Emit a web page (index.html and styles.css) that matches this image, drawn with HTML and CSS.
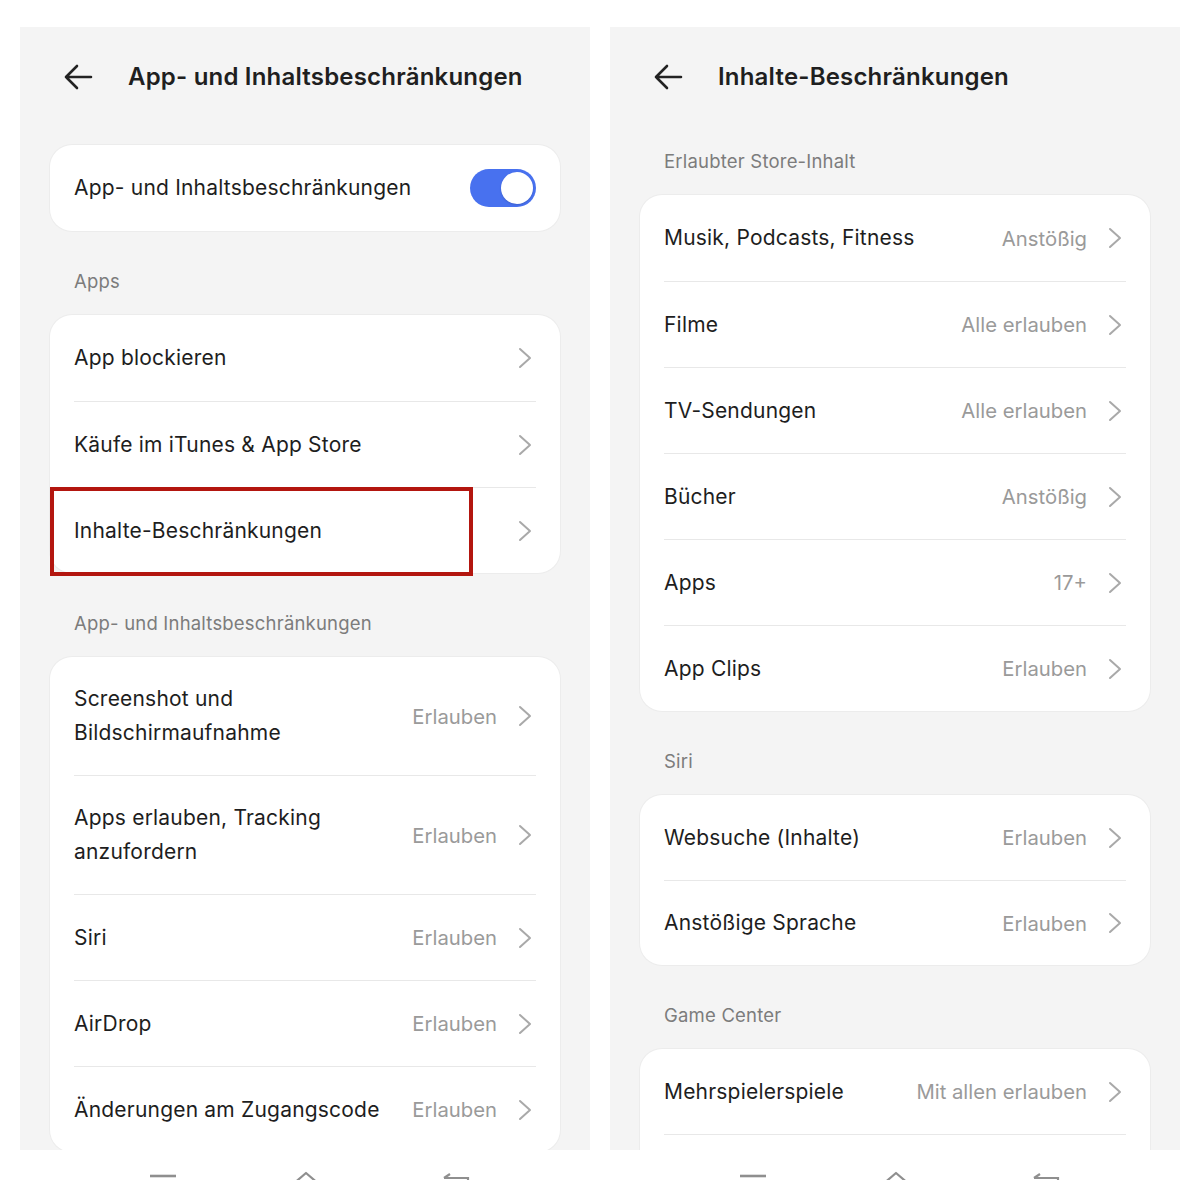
FILE: index.html
```html
<!DOCTYPE html>
<html lang="de">
<head>
<meta charset="utf-8">
<title>App- und Inhaltsbeschränkungen</title>
<link rel="stylesheet" href="styles.css">
</head>
<body>
<div class="screens">
  <section class="panel">
    <header class="header">
      <svg class="back" viewBox="0 0 32 32" width="32" height="32"><path d="M29 16H4M15 5L4 16l11 11" fill="none" stroke="#222" stroke-width="2.6" stroke-linecap="round" stroke-linejoin="round"/></svg>
      <h1 class="title">App- und Inhaltsbeschränkungen</h1>
    </header>
    <div class="card card-first">
      <div class="row">
        <span class="label">App- und Inhaltsbeschränkungen</span>
        <span class="toggle"><span class="knob"></span></span>
      </div>
    </div>
    <div class="section">Apps</div>
    <div class="card">
      <div class="row"><span class="label">App blockieren</span><svg class="chev" viewBox="0 0 14 22" width="14" height="22"><path d="M2 2l10 9-10 9" fill="none" stroke="#a9a9a9" stroke-width="2" stroke-linecap="round" stroke-linejoin="round"/></svg></div>
      <div class="row"><span class="label">Käufe im iTunes &amp; App Store</span><svg class="chev" viewBox="0 0 14 22" width="14" height="22"><path d="M2 2l10 9-10 9" fill="none" stroke="#a9a9a9" stroke-width="2" stroke-linecap="round" stroke-linejoin="round"/></svg></div>
      <div class="row"><span class="label">Inhalte-Beschränkungen</span><svg class="chev" viewBox="0 0 14 22" width="14" height="22"><path d="M2 2l10 9-10 9" fill="none" stroke="#a9a9a9" stroke-width="2" stroke-linecap="round" stroke-linejoin="round"/></svg><span class="highlight"></span></div>
    </div>
    <div class="section">App- und Inhaltsbeschränkungen</div>
    <div class="card">
      <div class="row tall"><span class="label">Screenshot und Bildschirmaufnahme</span><span class="value">Erlauben</span><svg class="chev" viewBox="0 0 14 22" width="14" height="22"><path d="M2 2l10 9-10 9" fill="none" stroke="#a9a9a9" stroke-width="2" stroke-linecap="round" stroke-linejoin="round"/></svg></div>
      <div class="row tall"><span class="label">Apps erlauben, Tracking anzufordern</span><span class="value">Erlauben</span><svg class="chev" viewBox="0 0 14 22" width="14" height="22"><path d="M2 2l10 9-10 9" fill="none" stroke="#a9a9a9" stroke-width="2" stroke-linecap="round" stroke-linejoin="round"/></svg></div>
      <div class="row"><span class="label">Siri</span><span class="value">Erlauben</span><svg class="chev" viewBox="0 0 14 22" width="14" height="22"><path d="M2 2l10 9-10 9" fill="none" stroke="#a9a9a9" stroke-width="2" stroke-linecap="round" stroke-linejoin="round"/></svg></div>
      <div class="row"><span class="label">AirDrop</span><span class="value">Erlauben</span><svg class="chev" viewBox="0 0 14 22" width="14" height="22"><path d="M2 2l10 9-10 9" fill="none" stroke="#a9a9a9" stroke-width="2" stroke-linecap="round" stroke-linejoin="round"/></svg></div>
      <div class="row"><span class="label">Änderungen am Zugangscode</span><span class="value">Erlauben</span><svg class="chev" viewBox="0 0 14 22" width="14" height="22"><path d="M2 2l10 9-10 9" fill="none" stroke="#a9a9a9" stroke-width="2" stroke-linecap="round" stroke-linejoin="round"/></svg></div>
    </div>
  </section>

  <section class="panel">
    <header class="header">
      <svg class="back" viewBox="0 0 32 32" width="32" height="32"><path d="M29 16H4M15 5L4 16l11 11" fill="none" stroke="#222" stroke-width="2.6" stroke-linecap="round" stroke-linejoin="round"/></svg>
      <h1 class="title">Inhalte-Beschränkungen</h1>
    </header>
    <div class="section section-top">Erlaubter Store-Inhalt</div>
    <div class="card">
      <div class="row"><span class="label">Musik, Podcasts, Fitness</span><span class="value">Anstößig</span><svg class="chev" viewBox="0 0 14 22" width="14" height="22"><path d="M2 2l10 9-10 9" fill="none" stroke="#a9a9a9" stroke-width="2" stroke-linecap="round" stroke-linejoin="round"/></svg></div>
      <div class="row"><span class="label">Filme</span><span class="value">Alle erlauben</span><svg class="chev" viewBox="0 0 14 22" width="14" height="22"><path d="M2 2l10 9-10 9" fill="none" stroke="#a9a9a9" stroke-width="2" stroke-linecap="round" stroke-linejoin="round"/></svg></div>
      <div class="row"><span class="label">TV-Sendungen</span><span class="value">Alle erlauben</span><svg class="chev" viewBox="0 0 14 22" width="14" height="22"><path d="M2 2l10 9-10 9" fill="none" stroke="#a9a9a9" stroke-width="2" stroke-linecap="round" stroke-linejoin="round"/></svg></div>
      <div class="row"><span class="label">Bücher</span><span class="value">Anstößig</span><svg class="chev" viewBox="0 0 14 22" width="14" height="22"><path d="M2 2l10 9-10 9" fill="none" stroke="#a9a9a9" stroke-width="2" stroke-linecap="round" stroke-linejoin="round"/></svg></div>
      <div class="row"><span class="label">Apps</span><span class="value">17+</span><svg class="chev" viewBox="0 0 14 22" width="14" height="22"><path d="M2 2l10 9-10 9" fill="none" stroke="#a9a9a9" stroke-width="2" stroke-linecap="round" stroke-linejoin="round"/></svg></div>
      <div class="row"><span class="label">App Clips</span><span class="value">Erlauben</span><svg class="chev" viewBox="0 0 14 22" width="14" height="22"><path d="M2 2l10 9-10 9" fill="none" stroke="#a9a9a9" stroke-width="2" stroke-linecap="round" stroke-linejoin="round"/></svg></div>
    </div>
    <div class="section">Siri</div>
    <div class="card card-compact">
      <div class="row"><span class="label">Websuche (Inhalte)</span><span class="value">Erlauben</span><svg class="chev" viewBox="0 0 14 22" width="14" height="22"><path d="M2 2l10 9-10 9" fill="none" stroke="#a9a9a9" stroke-width="2" stroke-linecap="round" stroke-linejoin="round"/></svg></div>
      <div class="row"><span class="label">Anstößige Sprache</span><span class="value">Erlauben</span><svg class="chev" viewBox="0 0 14 22" width="14" height="22"><path d="M2 2l10 9-10 9" fill="none" stroke="#a9a9a9" stroke-width="2" stroke-linecap="round" stroke-linejoin="round"/></svg></div>
    </div>
    <div class="section">Game Center</div>
    <div class="card card-compact">
      <div class="row"><span class="label">Mehrspielerspiele</span><span class="value">Mit allen erlauben</span><svg class="chev" viewBox="0 0 14 22" width="14" height="22"><path d="M2 2l10 9-10 9" fill="none" stroke="#a9a9a9" stroke-width="2" stroke-linecap="round" stroke-linejoin="round"/></svg></div>
      <div class="row row-empty"></div>
    </div>
  </section>
</div>

<div class="navs">
  <div class="nav">
    <svg class="nav-dash" viewBox="0 0 26 10" width="26" height="10"><path d="M0 5H26" stroke="#8f8f8f" stroke-width="2.6"/></svg>
    <svg class="nav-home" viewBox="0 0 30 16" width="30" height="16"><path d="M1 14L15 2l14 12" fill="none" stroke="#8f8f8f" stroke-width="2.2" stroke-linejoin="round"/></svg>
    <svg class="nav-back" viewBox="0 0 28 16" width="28" height="16"><path d="M2 6H26V16M2 6l6-4" fill="none" stroke="#8f8f8f" stroke-width="2.2"/></svg>
  </div>
  <div class="nav">
    <svg class="nav-dash" viewBox="0 0 26 10" width="26" height="10"><path d="M0 5H26" stroke="#8f8f8f" stroke-width="2.6"/></svg>
    <svg class="nav-home" viewBox="0 0 30 16" width="30" height="16"><path d="M1 14L15 2l14 12" fill="none" stroke="#8f8f8f" stroke-width="2.2" stroke-linejoin="round"/></svg>
    <svg class="nav-back" viewBox="0 0 28 16" width="28" height="16"><path d="M2 6H26V16M2 6l6-4" fill="none" stroke="#8f8f8f" stroke-width="2.2"/></svg>
  </div>
</div>
</body>
</html>
```

FILE: styles.css
```css
* { box-sizing: border-box; }

html, body {
  margin: 0;
  padding: 0;
  background: #ffffff;
}

body {
  width: 1200px;
  height: 1200px;
  overflow: hidden;
  font-family: "Inter", "Noto Sans", sans-serif;
  color: #1e1e1e;
}

.screens {
  display: flex;
  gap: 20px;
  padding: 27px 20px 0 20px;
}

.panel {
  width: 570px;
  height: 1123px;
  background: #f4f4f4;
  overflow: hidden;
  padding: 0 30px;
}

.header {
  height: 100px;
  display: flex;
  align-items: center;
  margin: 0 -30px;
  padding-left: 42px;
}

.back {
  flex: none;
  display: block;
}

.title {
  margin: 0 0 0 34px;
  font-size: 24px;
  font-weight: 600;
  color: #1f1f1f;
  letter-spacing: 0.2px;
  line-height: 30px;
}

.card {
  background: #ffffff;
  border-radius: 22px;
  box-shadow: 0 0 0 1px #ececec;
}

.card-first {
  margin-top: 18px;
}

.section {
  padding: 38px 0 22px 24px;
  font-size: 18.5px;
  line-height: 24px;
  letter-spacing: 0.2px;
  color: #7c7c7c;
}

.section-top {
  padding-top: 22px;
  padding-bottom: 22px;
}

.row {
  position: relative;
  margin: 0 24px;
  min-height: 86px;
  display: flex;
  align-items: center;
  padding-right: 4px;
}

.card-compact .row {
  min-height: 85px;
}

.row + .row {
  border-top: 1px solid #e8e8e8;
}

.row.tall {
  padding-top: 25px;
  padding-bottom: 25px;
}

.label {
  flex: 1;
  font-size: 21px;
  line-height: 34px;
  letter-spacing: 0.2px;
  color: #1e1e1e;
  margin-right: 20px;
}

.value {
  flex: none;
  font-size: 20.3px;
  color: #9a9a9a;
  white-space: nowrap;
  margin-right: 21px;
}

.chev {
  flex: none;
  display: block;
}

.toggle {
  flex: none;
  width: 66px;
  height: 38px;
  border-radius: 19px;
  background: #4871ef;
  display: flex;
  align-items: center;
  justify-content: flex-end;
  padding: 3px;
  margin-right: -4px;
}

.knob {
  width: 32px;
  height: 32px;
  border-radius: 50%;
  background: #ffffff;
  box-shadow: 0 1px 2px rgba(0, 0, 0, 0.15);
}

.highlight {
  position: absolute;
  left: -24px;
  top: -1px;
  width: 423px;
  height: 89px;
  border: 4px solid #b3160f;
}

.navs {
  display: flex;
  gap: 20px;
  padding: 0 20px;
  height: 30px;
  overflow: hidden;
}

.nav {
  width: 570px;
  display: flex;
  align-items: flex-start;
  padding-top: 21px;
  padding-left: 130px;
}

.nav svg {
  display: block;
  flex: none;
}

.nav-home {
  margin-left: 115px;
}

.nav-back {
  margin-left: 121px;
  margin-top: 1px;
}
```
